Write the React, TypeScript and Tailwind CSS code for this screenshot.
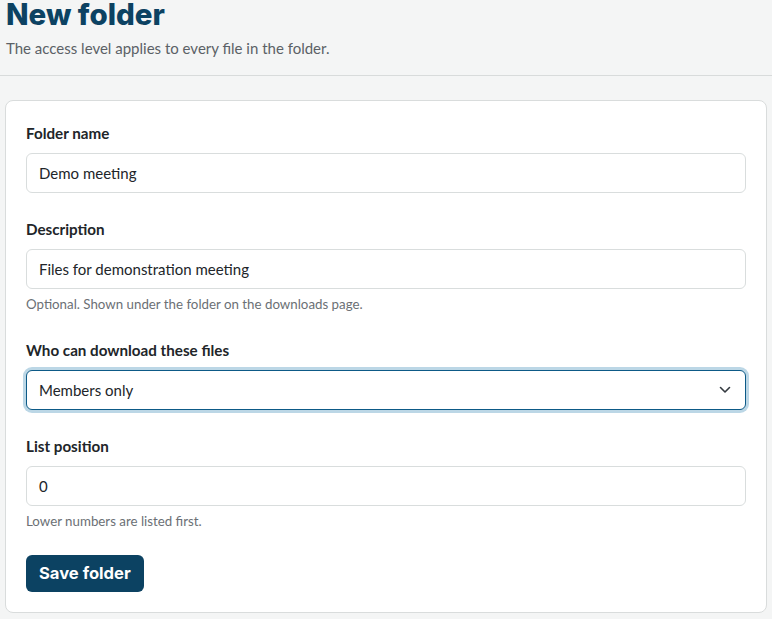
import React from "react";

const body = { fontFamily: "Lato, 'Open Sans', sans-serif" };

function Label({ children }: { children: React.ReactNode }) {
  return <div className="text-[15.2px] font-bold text-[#212529] leading-[20px] mb-[10px]">{children}</div>;
}

function TextInput({ value }: { value: string }) {
  return (
    <div className="h-[40px] w-full rounded-[6px] border border-[#d9dddd] bg-white px-[12px] flex items-center text-[15px] text-[#212529]">
      {value}
    </div>
  );
}

function Help({ children }: { children: React.ReactNode }) {
  return <div className="mt-[6px] text-[13.3px] leading-[19px] text-[#6b7075]">{children}</div>;
}

export default function App() {
  return (
    <div className="min-h-screen bg-[#f4f5f5]" style={body}>
      <div className="border-b border-[#d8dbdb] px-[6px] pb-[17px]">
        <h1 className="text-[29.5px] leading-[28px] font-extrabold text-[#0c4262]" style={{ fontFamily: "Inter, sans-serif" }}>
          New folder
        </h1>
        <p className="mt-[10px] text-[15px] leading-[20px] text-[#5b6166]">
          The access level applies to every file in the folder.
        </p>
      </div>
      <div className="px-[5px] pt-[24px] pb-[6px]">
        <div className="rounded-[8px] border border-[#d9dcdc] bg-white px-[20px] pt-[22px] pb-[20px]">
          <div>
            <Label>Folder name</Label>
            <TextInput value="Demo meeting" />
          </div>
          <div className="mt-[26px]">
            <Label>Description</Label>
            <TextInput value="Files for demonstration meeting" />
            <Help>Optional. Shown under the folder on the downloads page.</Help>
          </div>
          <div className="mt-[26px]">
            <Label>Who can download these files</Label>
            <div className="h-[40px] w-full rounded-[6px] border border-[#0d5a87] bg-white pl-[12px] pr-[14px] flex items-center justify-between text-[15px] text-[#212529] shadow-[0_0_0_3px_#bcd7e6]">
              <span>Members only</span>
              <svg width="12" height="8" viewBox="0 0 12 8" fill="none">
                <path d="M1.5 1.5 6 6l4.5-4.5" stroke="#343a40" strokeWidth="1.6" strokeLinecap="round" strokeLinejoin="round" />
              </svg>
            </div>
          </div>
          <div className="mt-[26px]">
            <Label>List position</Label>
            <TextInput value="0" />
            <Help>Lower numbers are listed first.</Help>
          </div>
          <button
            className="mt-[24px] h-[37px] px-[13px] rounded-[6px] bg-[#0c4262] text-white text-[16.6px] font-bold"
            style={{ fontFamily: "Inter, sans-serif" }}
          >
            Save folder
          </button>
        </div>
      </div>
    </div>
  );
}
